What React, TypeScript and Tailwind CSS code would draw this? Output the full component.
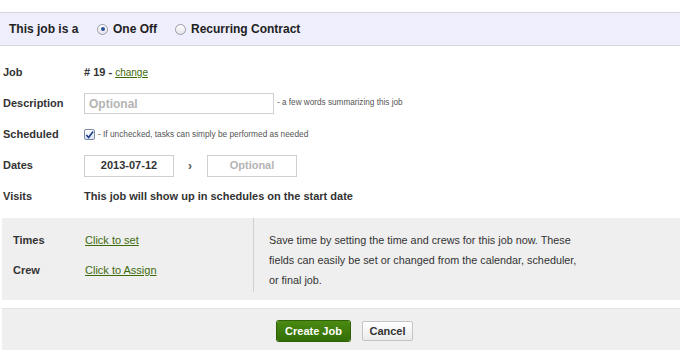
import React from 'react';

const font = { fontFamily: '"Liberation Sans", Arial, sans-serif' };

const Radio = ({ checked }: { checked?: boolean }) => (
  <span className="inline-flex h-[11px] w-[11px] items-center justify-center rounded-full border border-[#9a9aa8] bg-gradient-to-b from-white to-[#e4e4ea]">
    {checked && <span className="h-[4px] w-[4px] rounded-full bg-[#2a4f9a]" />}
  </span>
);

const Row = ({ label, children }: { label: string; children: React.ReactNode }) => (
  <div className="flex h-[31px] items-center">
    <div className="w-[84px] pl-[3px] text-[11px] font-bold text-[#333]">{label}</div>
    <div className="flex items-center">{children}</div>
  </div>
);

export default function App() {
  return (
    <div className="h-[350px] w-[680px] overflow-hidden bg-white text-[#333]" style={font}>
      <div className="h-[12px]" />
      <div className="flex h-[34px] items-center border-y border-[#d6d6de] bg-[#eeeefc] pl-[9px] text-[12px] font-bold text-[#222]">
        <span className="w-[88px]">This job is a</span>
        <span className="flex items-center gap-[5px]">
          <Radio checked />
          <span>One Off</span>
        </span>
        <span className="ml-[18px] flex items-center gap-[5px]">
          <Radio />
          <span>Recurring Contract</span>
        </span>
      </div>

      <div className="h-[11px]" />
      <Row label="Job">
        <span className="text-[11px] font-bold">#&nbsp;19 -&nbsp;</span>
        <a className="text-[10px] text-[#3d6b0b] underline">change</a>
      </Row>
      <Row label="Description">
        <div className="flex h-[21px] w-[190px] items-center border border-[#cfcfcf] bg-white pl-[4px] text-[12px] font-bold text-[#b4b4b4]">
          Optional
        </div>
        <span className="ml-[3px] text-[8.2px] text-[#555]">- a few words summarizing this job</span>
      </Row>
      <Row label="Scheduled">
        <span className="inline-flex h-[11px] w-[11px] items-center justify-center rounded-[2px] border border-[#7a8aa8] bg-gradient-to-b from-white to-[#dde3ee]">
          <svg width="10" height="10" viewBox="0 0 10 10">
            <path d="M1.5 5 L4 7.8 L9 1" fill="none" stroke="#1d3f8a" strokeWidth="1.8" />
          </svg>
        </span>
        <span className="ml-[3px] text-[8.3px] text-[#555]">- If unchecked, tasks can simply be performed as needed</span>
      </Row>
      <Row label="Dates">
        <div className="flex h-[22px] w-[90px] items-center justify-center border border-[#cfcfcf] text-[11px] font-bold text-[#333]">
          2013-07-12
        </div>
        <span className="ml-[11px] mr-[12px] w-[10px] text-center text-[12px] font-bold text-[#555]">&rsaquo;</span>
        <div className="flex h-[22px] w-[90px] items-center justify-center border border-[#cfcfcf] text-[11px] font-bold text-[#b4b4b4]">
          Optional
        </div>
      </Row>
      <Row label="Visits">
        <span className="text-[11px] font-bold text-[#333]">
          This job will show up in schedules on the start date
        </span>
      </Row>

      <div className="h-[6px]" />
      <div className="ml-[2px] flex h-[82px] bg-[#efefef]">
        <div className="mb-[8px] w-[252px] border-r border-[#cfcfcf] pl-[11px] pt-[14px]">
          <div className="flex h-[16px] items-center text-[11px]">
            <span className="w-[72px] font-bold text-[#333]">Times</span>
            <a className="text-[#3d6b0b] underline">Click to set</a>
          </div>
          <div className="mt-[14px] flex h-[16px] items-center text-[11px]">
            <span className="w-[72px] font-bold text-[#333]">Crew</span>
            <a className="text-[#3d6b0b] underline">Click to Assign</a>
          </div>
        </div>
        <div className="pl-[15px] pt-[12px] text-[10.8px] leading-[20px] text-[#333]">
          Save time by setting the time and crews for this job now. These
          <br />
          fields can easily be set or changed from the calendar, scheduler,
          <br />
          or final job.
        </div>
      </div>

      <div className="h-[8px]" />
      <div className="ml-[2px] flex h-[43px] items-start justify-center gap-[12px] border-t border-[#e4e4e4] bg-[#efefef] pl-[8px] pt-[12px]">
        <button className="h-[20px] w-[73px] rounded-[2px] bg-gradient-to-b from-[#4a8a12] to-[#336d06] text-[11px] font-bold text-white shadow-[0_0_0_1px_#2f6206]">
          Create Job
        </button>
        <button className="h-[20px] w-[51px] rounded-[2px] border border-[#c4c4c4] bg-gradient-to-b from-white to-[#ebebeb] text-[11px] font-bold text-[#333]">
          Cancel
        </button>
      </div>
    </div>
  );
}
